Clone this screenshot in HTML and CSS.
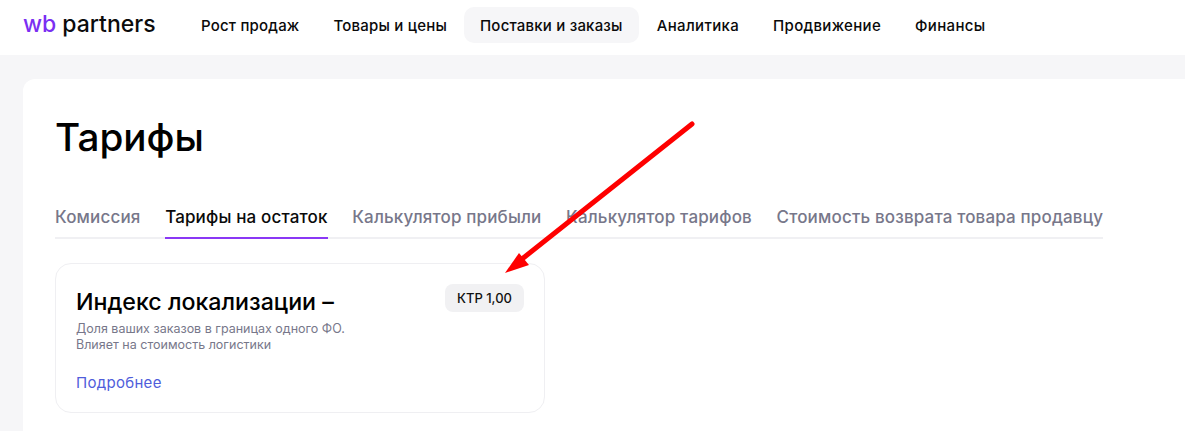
FILE: index.html
```html
<!DOCTYPE html>
<html lang="ru">
<head>
<meta charset="utf-8">
<title>Тарифы</title>
<link rel="stylesheet" href="styles.css">
</head>
<body>
<header class="header">
  <div class="logo"><span class="logo-wb">wb</span> <span class="logo-partners">partners</span></div>
  <nav class="nav">
    <a class="nav-item">Рост продаж</a>
    <a class="nav-item">Товары и цены</a>
    <a class="nav-item nav-item-active">Поставки и заказы</a>
    <a class="nav-item">Аналитика</a>
    <a class="nav-item">Продвижение</a>
    <a class="nav-item">Финансы</a>
  </nav>
</header>
<main class="page">
  <section class="sheet">
    <h1 class="title">Тарифы</h1>
    <div class="tabs">
      <a class="tab">Комиссия</a>
      <a class="tab tab-active">Тарифы на остаток</a>
      <a class="tab">Калькулятор прибыли</a>
      <a class="tab">Калькулятор тарифов</a>
      <a class="tab">Стоимость возврата товара продавцу</a>
    </div>
    <article class="card">
      <div class="card-top">
        <h2 class="card-title">Индекс локализации –</h2>
        <span class="badge">КТР 1,00</span>
      </div>
      <p class="card-text">Доля ваших заказов в границах одного ФО.<br>Влияет на стоимость логистики</p>
      <a class="card-link">Подробнее</a>
    </article>
  </section>
</main>
<svg class="arrow" width="1185" height="431" viewBox="0 0 1185 431" aria-hidden="true">
  <line x1="692" y1="124" x2="522" y2="259" class="arrow-line"/>
  <polygon points="505,273 519,253 529,265" class="arrow-head"/>
</svg>
</body>
</html>
```
FILE: styles.css
```css
* { box-sizing: border-box; }
html, body { margin: 0; padding: 0; }
body {
  width: 1185px;
  height: 431px;
  overflow: hidden;
  position: relative;
  background: #f6f6f8;
  font-family: Inter, "Liberation Sans", sans-serif;
  color: #000;
}
.header {
  height: 55px;
  background: #fff;
  display: flex;
  align-items: flex-start;
  padding: 7px 0 0 23px;
}
.logo {
  width: 162px;
  height: 36px;
  display: flex;
  align-items: center;
  gap: 6px;
  font-size: 23px;
  font-weight: 500;
  line-height: 36px;
  margin-top: -1px;
}
.logo-wb { color: #7b2ff2; }
.logo-partners { color: #0b0b0b; }
.nav { display: flex; gap: 2px; }
.nav-item {
  height: 36px;
  padding: 0 16px;
  border-radius: 10px;
  font-size: 15px;
  font-weight: 500;
  letter-spacing: 0.2px;
  line-height: 38px;
  color: #0a0a0a;
  white-space: nowrap;
}
.nav-item-active { background: #f6f6f8; margin-left: -1px; }
.nav-item-active + .nav-item { letter-spacing: 0.35px; }
.nav-item-active + .nav-item ~ .nav-item { letter-spacing: 0.32px; }
.page { padding: 24px 0 0 23px; }
.sheet {
  background: #fff;
  border-radius: 12px 0 0 0;
  height: 352px;
  padding: 34px 0 0 32px;
}
.title {
  margin: 0;
  font-size: 38.7px;
  font-weight: 500;
  line-height: 48px;
}
.tabs {
  width: 1048px;
  margin-top: 43px;
  display: flex;
  gap: 24.6px;
  border-bottom: 2px solid #f0f0f3;
  height: 35px;
}
.tab {
  height: 35px;
  font-size: 17px;
  font-weight: 500;
  letter-spacing: 0.16px;
  line-height: 26px;
  color: #77778a;
  white-space: nowrap;
}
.tab-active {
  color: #0a0a0a;
  border-bottom: 2px solid #8a38f5;
}
.card {
  width: 490px;
  height: 150px;
  margin-top: 24px;
  border: 1px solid #efeff2;
  border-radius: 16px;
  padding: 20px 20px 0;
}
.card-top {
  display: flex;
  justify-content: space-between;
  align-items: flex-start;
}
.card-title {
  margin: 2px 0 0;
  font-size: 23.2px;
  font-weight: 500;
  line-height: 32px;
}
.badge {
  height: 28px;
  padding: 0 12px;
  border-radius: 8px;
  background: #f1f1f3;
  font-size: 13px;
  font-weight: 500;
  line-height: 28px;
  color: #111;
}
.card-text {
  margin: 3px 0 0;
  font-size: 12.5px;
  line-height: 16px;
  color: #77778a;
}
.card-link {
  display: block;
  margin-top: 19px;
  font-size: 15px;
  letter-spacing: 0.3px;
  line-height: 22px;
  color: #4f5ddb;
}
.arrow { position: absolute; left: 0; top: 0; pointer-events: none; }
.arrow-line { stroke: #fe0000; stroke-width: 5; stroke-linecap: round; }
.arrow-head { fill: #fe0000; }
```
